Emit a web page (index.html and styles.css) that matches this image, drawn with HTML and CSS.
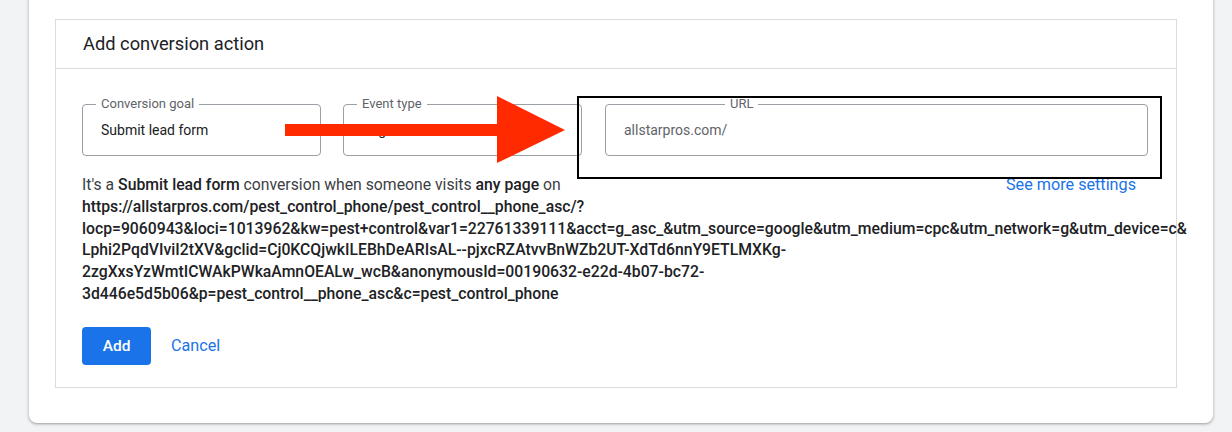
FILE: index.html
```html
<!DOCTYPE html>
<html>
<head>
<meta charset="utf-8">
<link rel="stylesheet" href="styles.css">
</head>
<body>
<div class="outer">
  <div class="panel">
    <div class="panel-head">Add conversion action</div>
    <div class="panel-body">
      <div class="fields">
        <div class="field goal">
          <span class="label">Conversion goal</span>
          <span class="value">Submit lead form</span>
        </div>
        <div class="field event">
          <span class="label">Event type</span>
          <span class="value">Page load</span>
        </div>
        <div class="field url">
          <span class="label center">URL</span>
          <span class="value muted">allstarpros.com/</span>
        </div>
      </div>
      <div class="desc-row">
        <p class="desc">It's a <b>Submit lead form</b> conversion when someone visits <b>any page</b> on<br><b>https://allstarpros.com/pest_control_phone/pest_control__phone_asc/?<br>locp=9060943&amp;loci=1013962&amp;kw=pest+control&amp;var1=22761339111&amp;acct=g_asc_&amp;utm_source=google&amp;utm_medium=cpc&amp;utm_network=g&amp;utm_device=c&amp;<br>Lphi2PqdVIviI2tXV&amp;gclid=Cj0KCQjwkILEBhDeARIsAL--pjxcRZAtvvBnWZb2UT-XdTd6nnY9ETLMXKg-<br>2zgXxsYzWmtICWAkPWkaAmnOEALw_wcB&amp;anonymousId=00190632-e22d-4b07-bc72-<br>3d446e5d5b06&amp;p=pest_control__phone_asc&amp;c=pest_control_phone</b></p>
        <a class="more">See more settings</a>
      </div>
      <div class="actions">
        <button class="btn-add">Add</button>
        <a class="cancel">Cancel</a>
      </div>
    </div>
    <div class="highlight"></div>
    <svg class="arrow" width="290" height="70" viewBox="0 0 290 70">
      <rect x="0" y="28" width="215" height="12" fill="#ff2a00"/>
      <polygon points="212,0 280,34 212,67" fill="#ff2a00"/>
    </svg>
  </div>
</div>
</body>
</html>
```
FILE: styles.css
```css
* { box-sizing: border-box; }
html, body { margin: 0; padding: 0; }
body {
  background: #f1f3f4;
  font-family: Roboto, "Liberation Sans", sans-serif;
  color: #202124;
  width: 1232px;
  height: 432px;
  overflow: hidden;
}
.outer {
  margin: -10px 0 0 29px;
  width: 1184px;
  height: 433px;
  background: #fff;
  border-radius: 8px;
  box-shadow: 0 1px 2px rgba(60,64,67,0.3), 0 1px 3px 1px rgba(60,64,67,0.15);
  padding: 29px 0 0 26px;
}
.panel {
  position: relative;
  width: 1122px;
  height: 369px;
  border: 1px solid #dadce0;
}
.panel-head {
  height: 49px;
  border-bottom: 1px solid #dadce0;
  padding: 13px 0 0 27px;
  font-size: 18.3px;
  color: #202124;
}
.panel-body {
  padding: 35px 0 0 26px;
}
.fields {
  display: flex;
  gap: 22px;
}
.field {
  position: relative;
  height: 52px;
  border: 1px solid #9aa0a6;
  border-radius: 4px;
  display: flex;
  align-items: center;
  padding-left: 18px;
  font-size: 14px;
}
.goal, .event { width: 239px; }
.url { width: 543px; margin-left: 1px; }
.label {
  position: absolute;
  top: -9px;
  left: 13px;
  background: #fff;
  padding: 0 5px;
  font-size: 13px;
  color: #5f6368;
  line-height: 16px;
}
.label.center { left: 119px; }
.value { color: #202124; }
.value.muted { color: #5f6368; }
.desc-row {
  display: flex;
  justify-content: space-between;
  margin-top: 18px;
  padding-right: 40px;
}
.desc {
  margin: 0;
  font-size: 15.75px;
  line-height: 21.8px;
  color: #3c4043;
  white-space: nowrap;
  width: 0;
}
.desc b { color: #202124; font-weight: 500; }
.more {
  color: #1a73e8;
  font-size: 16.2px;
  line-height: 21.8px;
}
.actions {
  display: flex;
  align-items: center;
  gap: 20px;
  margin-top: 22px;
}
.btn-add {
  width: 69px;
  height: 38px;
  border: none;
  border-radius: 4px;
  background: #1a73e8;
  color: #fff;
  font-family: Roboto, "Liberation Sans", sans-serif;
  font-size: 15.5px;
  font-weight: 500;
  padding: 0;
}
.cancel {
  color: #1a73e8;
  font-size: 16.2px;
  font-weight: 400;
}
.highlight {
  position: absolute;
  left: 521px;
  top: 76px;
  width: 585px;
  height: 83px;
  border: 2px solid #000;
}
.arrow {
  position: absolute;
  left: 229px;
  top: 76px;
}
```
